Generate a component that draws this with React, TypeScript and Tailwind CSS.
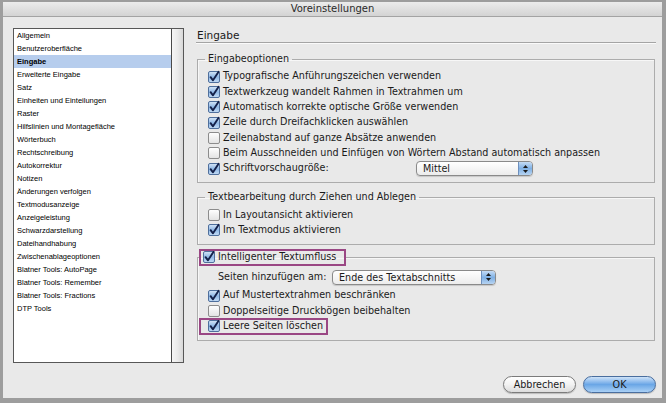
import React from "react";

const items = [
  "Allgemein",
  "Benutzeroberfläche",
  "Eingabe",
  "Erweiterte Eingabe",
  "Satz",
  "Einheiten und Einteilungen",
  "Raster",
  "Hilfslinien und Montagefläche",
  "Wörterbuch",
  "Rechtschreibung",
  "Autokorrektur",
  "Notizen",
  "Änderungen verfolgen",
  "Textmodusanzeige",
  "Anzeigeleistung",
  "Schwarzdarstellung",
  "Dateihandhabung",
  "Zwischenablageoptionen",
  "Blatner Tools: AutoPage",
  "Blatner Tools: Remember",
  "Blatner Tools: Fractions",
  "DTP Tools",
];

function Check({ checked }: { checked: boolean }) {
  return (
    <svg width="12" height="12" viewBox="0 0 12 12" className="shrink-0 overflow-visible">
      <defs>
        <linearGradient id="cb-on" x1="0" y1="0" x2="0" y2="1">
          <stop offset="0" stopColor="#d6e6f7" />
          <stop offset="0.5" stopColor="#8fb8e6" />
          <stop offset="1" stopColor="#c4dcf5" />
        </linearGradient>
        <linearGradient id="cb-off" x1="0" y1="0" x2="0" y2="1">
          <stop offset="0" stopColor="#ffffff" />
          <stop offset="1" stopColor="#e2e2e2" />
        </linearGradient>
      </defs>
      <rect
        x="0.5"
        y="0.5"
        width="11"
        height="11"
        rx="1.5"
        fill={checked ? "url(#cb-on)" : "url(#cb-off)"}
        stroke={checked ? "#4f6f9c" : "#8c8c8c"}
      />
      {checked && (
        <path
          d="M2.6 6.2 L5 9.3 L10.6 0.8"
          fill="none"
          stroke="#14214a"
          strokeWidth="1.9"
          strokeLinecap="round"
          strokeLinejoin="round"
        />
      )}
    </svg>
  );
}

function Row({ checked, label }: { checked: boolean; label: string }) {
  return (
    <div className="flex h-[15.33px] items-center gap-[3px] whitespace-nowrap">
      <Check checked={checked} />
      <span>{label}</span>
    </div>
  );
}

function Popup({ label, width }: { label: string; width: string }) {
  return (
    <div
      className={`flex h-[15px] items-stretch overflow-hidden rounded-[4px] border border-[#8a8a8a] bg-gradient-to-b from-white to-[#ececec] shadow-[0_1px_1px_rgba(0,0,0,0.15)] ${width}`}
    >
      <div className="flex flex-1 items-center whitespace-nowrap pl-[6px] text-[9.6px] leading-none">{label}</div>
      <div className="flex w-[14px] flex-col items-center justify-center gap-[2px] border-l border-[#6d8fbd] bg-gradient-to-b from-[#c5dcf5] via-[#7fb0e4] to-[#b7d4f2]">
        <svg width="5" height="3" viewBox="0 0 5 3">
          <path d="M2.5 0 L5 3 L0 3 Z" fill="#1b1b1b" />
        </svg>
        <svg width="5" height="3" viewBox="0 0 5 3">
          <path d="M0 0 L5 0 L2.5 3 Z" fill="#1b1b1b" />
        </svg>
      </div>
    </div>
  );
}

export default function App() {
  return (
    <div
      className="h-[403px] w-[666px] bg-[#9d9d9d] pb-[5px] pl-[3px] pr-[4px] pt-[2px] text-[#1a1a1a]"
      style={{ fontFamily: '"DejaVu Sans", "Liberation Sans", sans-serif' }}
    >
      <div className="flex h-full flex-col bg-[#e9e9e9]">
        <div className="flex h-[15px] shrink-0 items-center justify-center border-b border-[#a3a3a3] bg-gradient-to-b from-[#ececec] to-[#d3d3d3] text-[10px] leading-none text-[#2a2a2a]">
          Voreinstellungen
        </div>
        <div className="flex pl-[10px] pt-[11px]">
          {/* Sidebar */}
          <div className="flex h-[335px] w-[171px] shrink-0 border border-[#575757] bg-white">
            <div
              className="flex-1 text-[7.5px] text-black"
              style={{ fontFamily: '"Liberation Sans", Arial, sans-serif' }}
            >
              {items.map((it) => (
                <div
                  key={it}
                  className={`flex h-[13px] items-center whitespace-nowrap pl-[3px] ${it === "Eingabe" ? "bg-[#b6cded] font-bold" : ""}`}
                >
                  {it}
                </div>
              ))}
            </div>
            <div className="w-[12px] border-l border-[#4a4a4a] bg-gradient-to-r from-[#f6f6f6] via-[#ebebeb] to-[#d8d8d8]" />
          </div>

          {/* Main */}
          <div className="ml-[12px] flex w-[460px] flex-col text-[9.6px]">
            <div className="flex h-[15px] items-center border-b border-[#a4a4a4] pl-[1px] text-[10.5px] leading-none shadow-[0_1px_0_#fafafa]">
              Eingabe
            </div>

            {/* Group 1 */}
            <fieldset className="mx-[1px] mt-[10px] border border-[#acacac] shadow-[inset_1px_1px_0_#f7f7f7]">
              <legend className="ml-[7px] px-[3px] leading-[12px]">Eingabeoptionen</legend>
              <div className="px-[10px] pb-[6px] pt-[4px]">
                <Row checked label="Typografische Anführungszeichen verwenden" />
                <Row checked label="Textwerkzeug wandelt Rahmen in Textrahmen um" />
                <Row checked label="Automatisch korrekte optische Größe verwenden" />
                <Row checked label="Zeile durch Dreifachklicken auswählen" />
                <Row checked={false} label="Zeilenabstand auf ganze Absätze anwenden" />
                <Row checked={false} label="Beim Ausschneiden und Einfügen von Wörtern Abstand automatisch anpassen" />
                <div className="flex h-[15.33px] items-center">
                  <div className="flex w-[208px] items-center gap-[3px] whitespace-nowrap">
                    <Check checked />
                    <span>Schriftvorschaugröße:</span>
                  </div>
                  <Popup label="Mittel" width="w-[117px]" />
                </div>
              </div>
            </fieldset>

            {/* Group 2 */}
            <fieldset className="mx-[1px] mt-[8px] border border-[#acacac] shadow-[inset_1px_1px_0_#f7f7f7]">
              <legend className="ml-[7px] px-[3px] leading-[12px]">Textbearbeitung durch Ziehen und Ablegen</legend>
              <div className="px-[10px] pb-[6px] pt-[4px]">
                <Row checked={false} label="In Layoutansicht aktivieren" />
                <Row checked label="Im Textmodus aktivieren" />
              </div>
            </fieldset>

            {/* Group 3 */}
            <fieldset className="mx-[1px] mt-[5px] border border-[#acacac] shadow-[inset_1px_1px_0_#f7f7f7]">
              <legend className="ml-[2px] flex h-[15px] w-[145px] items-center gap-[3px] whitespace-nowrap pl-[3px] outline-2 -outline-offset-1 outline-[#9a4784]">
                <Check checked />
                <span>Intelligenter Textumfluss</span>
              </legend>
              <div className="px-[10px] pb-[6px] pt-[4px]">
                <div className="flex h-[17px] items-center">
                  <span className="ml-[10px] w-[114px] whitespace-nowrap">Seiten hinzufügen am:</span>
                  <Popup label="Ende des Textabschnitts" width="w-[164px]" />
                </div>
                <div className="mt-[2px]">
                  <Row checked label="Auf Mustertextrahmen beschränken" />
                  <Row checked={false} label="Doppelseitige Druckbögen beibehalten" />
                  <div className="-ml-[8px] flex h-[15.33px] w-[127px] items-center gap-[3px] whitespace-nowrap pl-[8px] outline-2 -outline-offset-1 outline-[#9a4784]">
                    <Check checked />
                    <span>Leere Seiten löschen</span>
                  </div>
                </div>
              </div>
            </fieldset>

            {/* Buttons */}
            <div className="mt-[35px] flex justify-end gap-[7px]">
              <button className="flex h-[17px] w-[73px] items-center justify-center rounded-full border border-[#7b7b7b] bg-gradient-to-b from-white via-[#f2f2f2] to-[#dcdcdc] text-[9.6px] leading-none shadow-[0_1px_1px_rgba(0,0,0,0.2)]">
                Abbrechen
              </button>
              <button className="flex h-[17px] w-[73px] items-center justify-center rounded-full border border-[#4a6e9e] bg-gradient-to-b from-[#cfe3f8] via-[#6aa6e6] to-[#a9d0f5] text-[9.6px] leading-none shadow-[0_1px_1px_rgba(0,0,0,0.2)]">
                OK
              </button>
            </div>
          </div>
        </div>
      </div>
    </div>
  );
}
